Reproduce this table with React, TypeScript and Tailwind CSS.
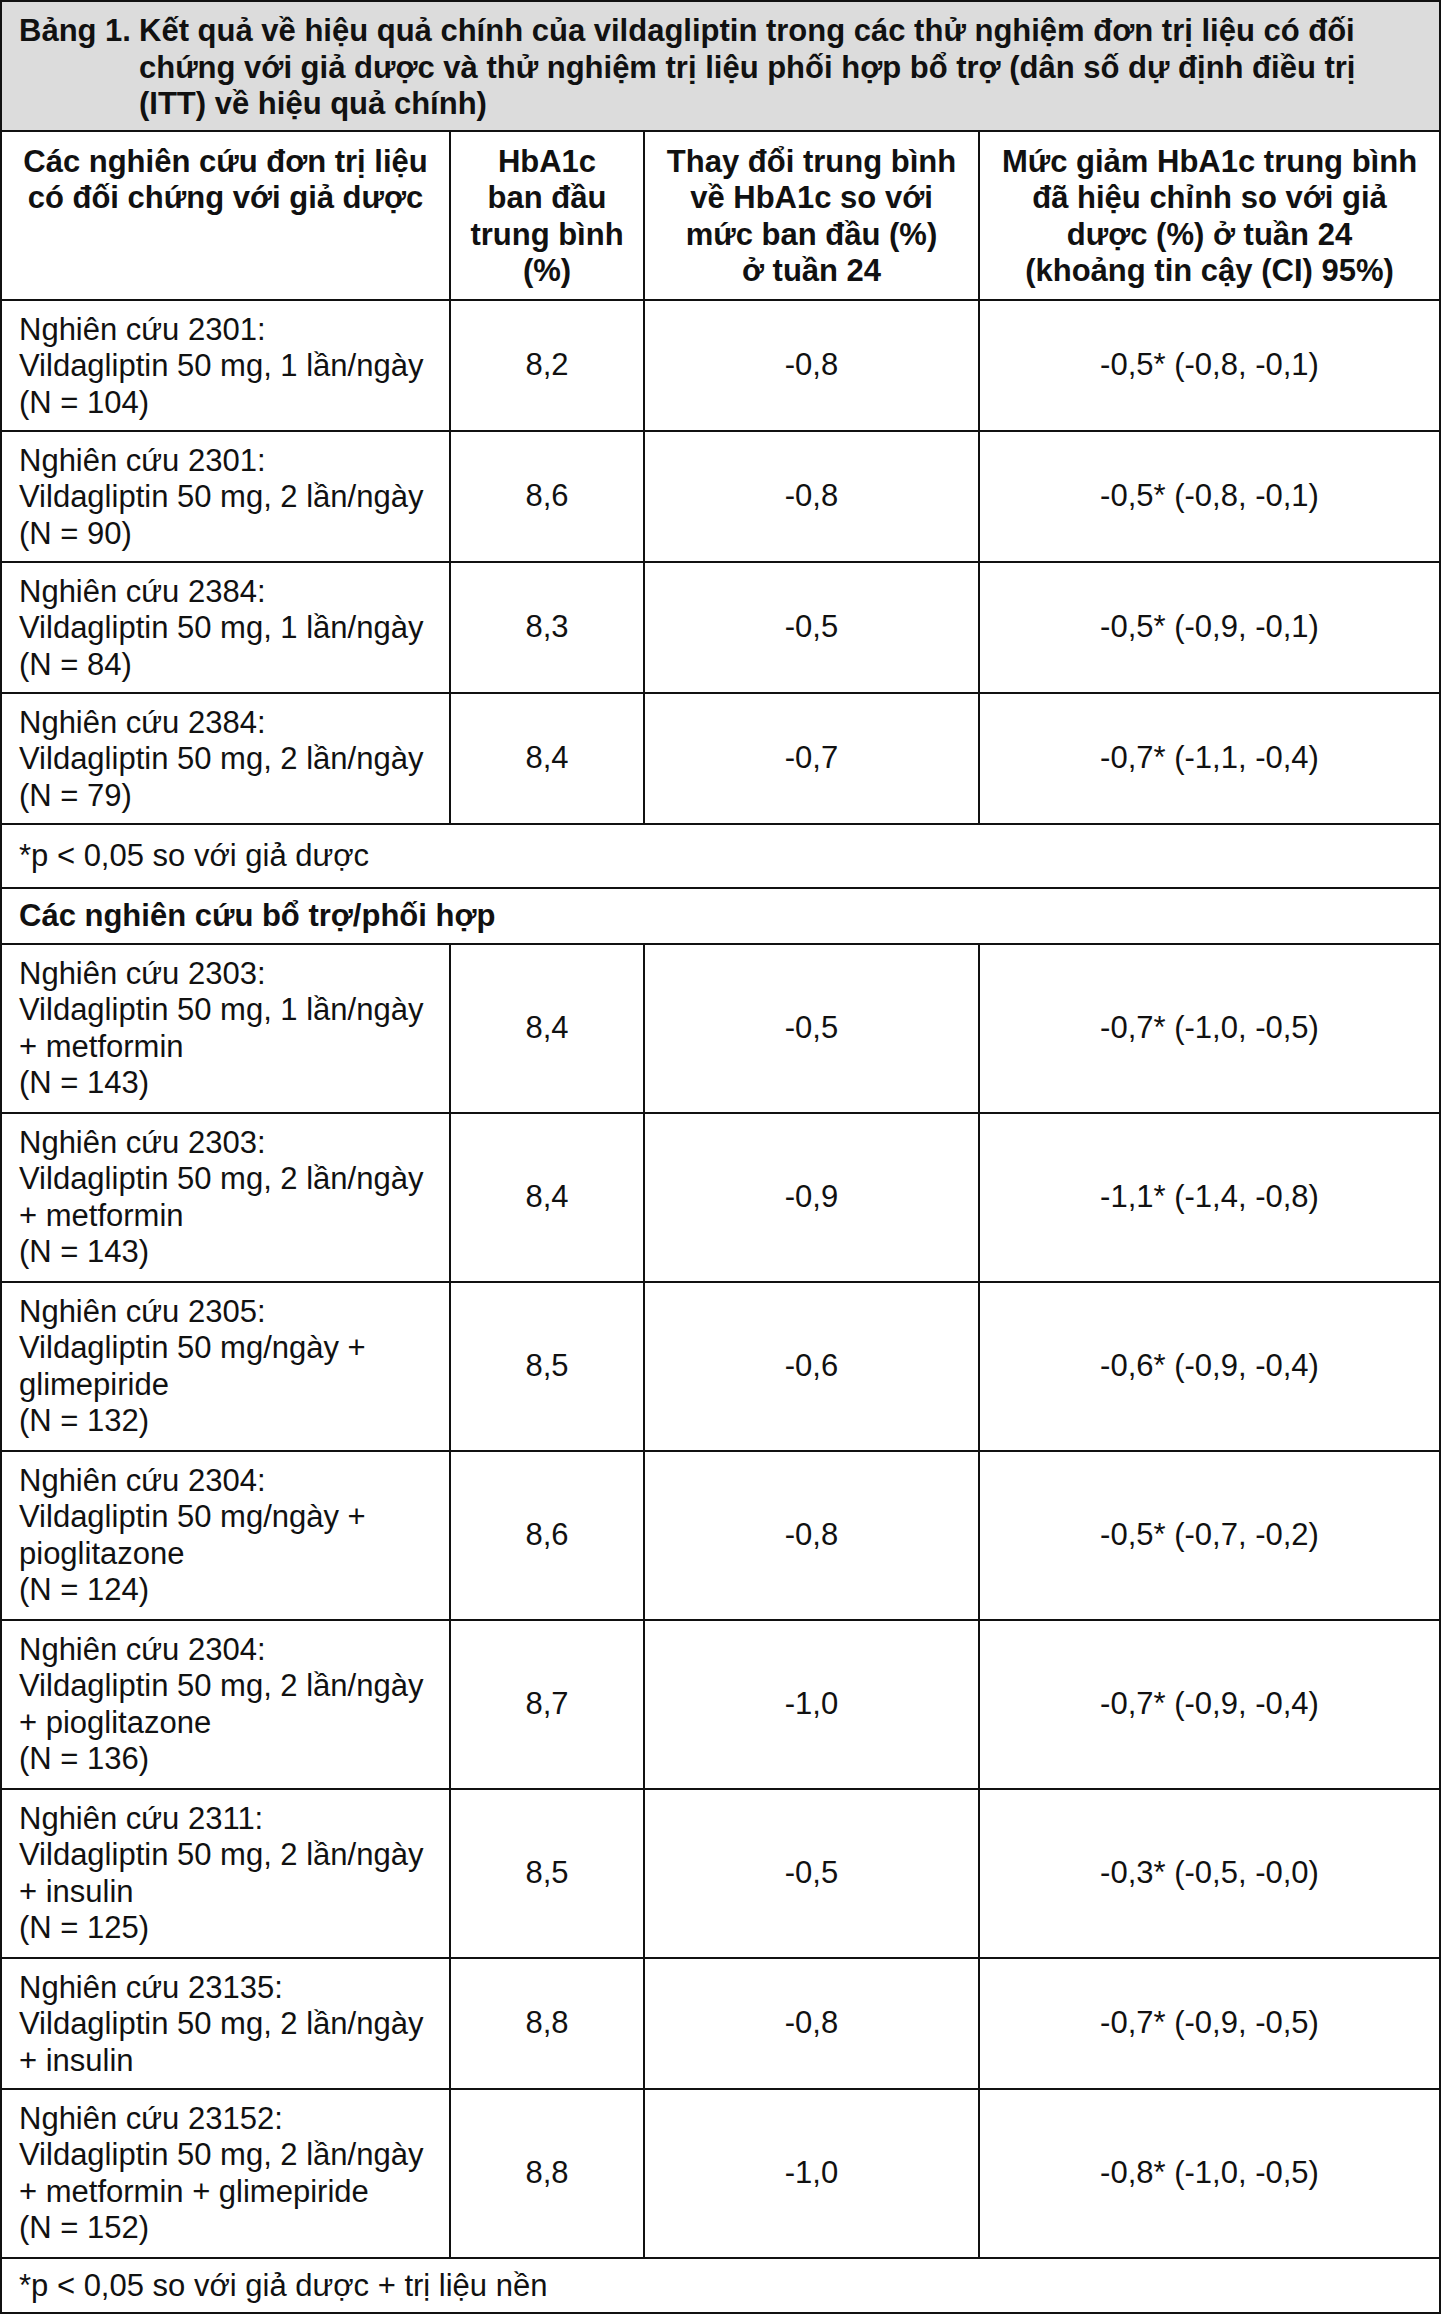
const font = { fontFamily: '"Liberation Sans", Arial, sans-serif' };

type Row = { study: string[]; base: string; change: string; diff: string };

const mono: Row[] = [
  { study: ["Nghiên cứu 2301:", "Vildagliptin 50 mg, 1 lần/ngày", "(N = 104)"], base: "8,2", change: "-0,8", diff: "-0,5* (-0,8, -0,1)" },
  { study: ["Nghiên cứu 2301:", "Vildagliptin 50 mg, 2 lần/ngày", "(N = 90)"], base: "8,6", change: "-0,8", diff: "-0,5* (-0,8, -0,1)" },
  { study: ["Nghiên cứu 2384:", "Vildagliptin 50 mg, 1 lần/ngày", "(N = 84)"], base: "8,3", change: "-0,5", diff: "-0,5* (-0,9, -0,1)" },
  { study: ["Nghiên cứu 2384:", "Vildagliptin 50 mg, 2 lần/ngày", "(N = 79)"], base: "8,4", change: "-0,7", diff: "-0,7* (-1,1, -0,4)" },
];

const addon: Row[] = [
  { study: ["Nghiên cứu 2303:", "Vildagliptin 50 mg, 1 lần/ngày", "+ metformin", "(N = 143)"], base: "8,4", change: "-0,5", diff: "-0,7* (-1,0, -0,5)" },
  { study: ["Nghiên cứu 2303:", "Vildagliptin 50 mg, 2 lần/ngày", "+ metformin", "(N = 143)"], base: "8,4", change: "-0,9", diff: "-1,1* (-1,4, -0,8)" },
  { study: ["Nghiên cứu 2305:", "Vildagliptin 50 mg/ngày +", "glimepiride", "(N = 132)"], base: "8,5", change: "-0,6", diff: "-0,6* (-0,9, -0,4)" },
  { study: ["Nghiên cứu 2304:", "Vildagliptin 50 mg/ngày +", "pioglitazone", "(N = 124)"], base: "8,6", change: "-0,8", diff: "-0,5* (-0,7, -0,2)" },
  { study: ["Nghiên cứu 2304:", "Vildagliptin 50 mg, 2 lần/ngày", "+ pioglitazone", "(N = 136)"], base: "8,7", change: "-1,0", diff: "-0,7* (-0,9, -0,4)" },
  { study: ["Nghiên cứu 2311:", "Vildagliptin 50 mg, 2 lần/ngày", "+ insulin", "(N = 125)"], base: "8,5", change: "-0,5", diff: "-0,3* (-0,5, -0,0)" },
  { study: ["Nghiên cứu 23135:", "Vildagliptin 50 mg, 2 lần/ngày", "+ insulin"], base: "8,8", change: "-0,8", diff: "-0,7* (-0,9, -0,5)" },
  { study: ["Nghiên cứu 23152:", "Vildagliptin 50 mg, 2 lần/ngày", "+ metformin + glimepiride", "(N = 152)"], base: "8,8", change: "-1,0", diff: "-0,8* (-1,0, -0,5)" },
];

function Lines({ lines }: { lines: string[] }) {
  return (
    <>
      {lines.map((l, i) => (
        <div key={i} className="whitespace-nowrap">
          {l}
        </div>
      ))}
    </>
  );
}

function DataRow({ row }: { row: Row }) {
  const tall = row.study.length > 3;
  return (
    <>
      <div className={tall ? "border-r-2 border-b-2 border-[#111] pl-[17px] pt-[11px] pb-[10px]" : "border-r-2 border-b-2 border-[#111] pl-[17px] pt-[11px] pb-[8.5px]"}>
        <Lines lines={row.study} />
      </div>
      <div className="border-r-2 border-b-2 border-[#111] flex items-center justify-center">{row.base}</div>
      <div className="border-r-2 border-b-2 border-[#111] flex items-center justify-center">{row.change}</div>
      <div className="border-r-2 border-b-2 border-[#111] flex items-center justify-center">{row.diff}</div>
    </>
  );
}

export default function App() {
  return (
    <div className="w-[1441px] bg-white text-[#111] text-[31px] leading-[36.5px]" style={font}>
      <div className="grid grid-cols-[449px_194px_335px_461px] border-t-2 border-l-2 border-[#111]">
        {/* TITLE */}
        <div className="col-span-4 border-r-2 border-b-2 border-[#111] bg-[#dcdcdc] font-bold pl-[17px] pt-[11px] pb-[7px] flex">
          <span className="w-[120px] shrink-0 whitespace-nowrap">Bảng 1.</span>
          <div>
            <div className="whitespace-nowrap">Kết quả về hiệu quả chính của vildagliptin trong các thử nghiệm đơn trị liệu có đối</div>
            <div className="whitespace-nowrap">chứng với giả dược và thử nghiệm trị liệu phối hợp bổ trợ (dân số dự định điều trị</div>
            <div className="whitespace-nowrap">(ITT) về hiệu quả chính)</div>
          </div>
        </div>

        {/* HEADER */}
        <div className="border-r-2 border-b-2 border-[#111] font-bold text-center pt-[12px] pb-[9px]">
          <Lines lines={["Các nghiên cứu đơn trị liệu", "có đối chứng với giả dược"]} />
        </div>
        <div className="border-r-2 border-b-2 border-[#111] font-bold text-center pt-[12px] pb-[9px]">
          <Lines lines={["HbA1c", "ban đầu", "trung bình", "(%)"]} />
        </div>
        <div className="border-r-2 border-b-2 border-[#111] font-bold text-center pt-[12px] pb-[9px]">
          <Lines lines={["Thay đổi trung bình", "về HbA1c so với", "mức ban đầu (%)", "ở tuần 24"]} />
        </div>
        <div className="border-r-2 border-b-2 border-[#111] font-bold text-center pt-[12px] pb-[9px]">
          <Lines lines={["Mức giảm HbA1c trung bình", "đã hiệu chỉnh so với giả", "dược (%) ở tuần 24", "(khoảng tin cậy (CI) 95%)"]} />
        </div>

        {mono.map((r, i) => (
          <DataRow key={"m" + i} row={r} />
        ))}

        <div className="col-span-4 border-r-2 border-b-2 border-[#111] pl-[17px] pt-[13px] pb-[13px] whitespace-nowrap">
          *p &lt; 0,05 so với giả dược
        </div>
        <div className="col-span-4 border-r-2 border-b-2 border-[#111] font-bold pl-[17px] pt-[9px] pb-[8px] whitespace-nowrap">
          Các nghiên cứu bổ trợ/phối hợp
        </div>

        {addon.map((r, i) => (
          <DataRow key={"a" + i} row={r} />
        ))}

        <div className="col-span-4 border-r-2 border-b-2 border-[#111] pl-[17px] pt-[9px] pb-[8px] whitespace-nowrap">
          *p &lt; 0,05 so với giả dược + trị liệu nền
        </div>
      </div>
    </div>
  );
}
